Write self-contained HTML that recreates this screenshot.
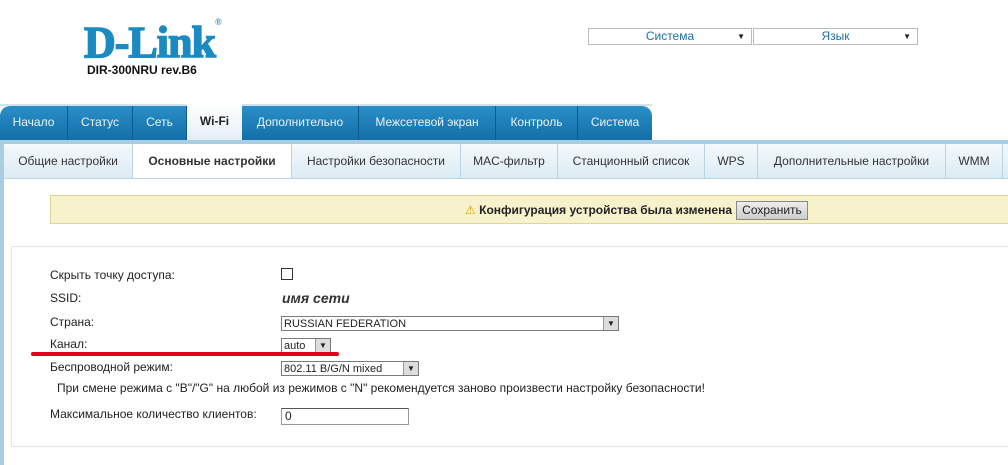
<!DOCTYPE html>
<html><head><meta charset="utf-8"><style>
body{margin:0;width:1008px;height:465px;background:#fff;position:relative;overflow:hidden;font-family:"Liberation Sans","DejaVu Sans",sans-serif;font-size:12px;color:#222}
.a{position:absolute}
.tab{position:absolute;top:106px;height:34px;line-height:32px;color:#e8f4fb;background:linear-gradient(#2b8fc8,#136fa8);border-right:1px solid #0d5b8c;text-align:center;font-size:12px}
.st{position:absolute;top:144px;height:34px;line-height:34px;color:#333;background:linear-gradient(#f4f9fc,#dcebf4);border-right:1px solid #b9d3e3;text-align:center;font-size:12px}
.lbl{position:absolute;left:50px;font-size:12px;color:#222}
.sel{position:absolute;border:1px solid #7a7a7a;background:#fff;height:15px;line-height:15px;font-size:11px;padding-left:2px;box-sizing:border-box}
.sel i{position:absolute;right:0;top:0;width:14px;height:13px;background:#ddd;border-left:1px solid #999;font-style:normal;font-size:8px;text-align:center;line-height:13px}
</style></head><body>
<div class="a" style="left:84px;top:17px;font:bold 44px 'Liberation Serif',serif;color:#1b8ac1;letter-spacing:-1px;-webkit-text-stroke:1.5px #1b8ac1">D-Link<span style="font-size:9px;vertical-align:top;-webkit-text-stroke:0">®</span></div>
<div class="a" style="left:87px;top:63px;font:bold 12px 'Liberation Sans',sans-serif;color:#111">DIR-300NRU rev.B6</div>
<div class="a" style="left:588px;top:28px;width:164px;height:17px;border:1px solid #bbb;box-sizing:border-box;text-align:center;line-height:15px;color:#1a6fa8">Система<span style="position:absolute;right:6px;font-size:8px;color:#222">▼</span></div>
<div class="a" style="left:753px;top:28px;width:165px;height:17px;border:1px solid #bbb;box-sizing:border-box;text-align:center;line-height:15px;color:#1a6fa8">Язык<span style="position:absolute;right:6px;font-size:8px;color:#222">▼</span></div>
<div class="a" style="left:0;top:104px;width:652px;height:2px;background:#cfe3ef"></div>
<div class="tab" style="left:0;width:67px;border-top-left-radius:10px">Начало</div>
<div class="tab" style="left:68px;width:64px">Статус</div>
<div class="tab" style="left:133px;width:53px">Сеть</div>
<div class="tab" style="left:187px;width:55px;top:104px;height:36px;line-height:34px;background:linear-gradient(#fff,#e3eff6);color:#222;font-weight:bold;border-right:none">Wi-Fi</div>
<div class="tab" style="left:242px;width:116px">Дополнительно</div>
<div class="tab" style="left:359px;width:136px">Межсетевой экран</div>
<div class="tab" style="left:496px;width:81px">Контроль</div>
<div class="tab" style="left:578px;width:74px;border-top-right-radius:10px;border-right:none">Система</div>
<div class="a" style="left:0;top:140px;width:1008px;height:4px;background:#a9cde3"></div>
<div class="a" style="left:0;top:140px;width:4px;height:325px;background:#a9cde3"></div>
<div class="st" style="left:4px;width:128px">Общие настройки</div>
<div class="st" style="left:133px;width:158px;background:#fff;font-weight:bold">Основные настройки</div>
<div class="st" style="left:292px;width:168px">Настройки безопасности</div>
<div class="st" style="left:461px;width:96px">MAC-фильтр</div>
<div class="st" style="left:558px;width:146px">Станционный список</div>
<div class="st" style="left:705px;width:52px">WPS</div>
<div class="st" style="left:758px;width:187px">Дополнительные настройки</div>
<div class="st" style="left:946px;width:56px">WMM</div>
<div class="st" style="left:1003px;width:5px;border:none"></div>
<div class="a" style="left:4px;top:178px;width:1004px;height:1px;background:#b9d3e3"></div>
<div class="a" style="left:50px;top:195px;width:960px;height:29px;background:#f8f2cc;border:1px solid #e0d49a;box-sizing:border-box"></div>
<div class="a" style="right:276px;top:203px;font-size:12px;font-weight:bold;color:#222;white-space:nowrap"><span style="color:#d4a000">⚠</span> Конфигурация устройства была изменена</div>
<div class="a" style="left:736px;top:201px;width:72px;height:19px;background:linear-gradient(#eee,#ccc);border:1px solid #888;box-sizing:border-box;text-align:center;line-height:17px;font-size:12px">Сохранить</div>
<div class="a" style="left:11px;top:246px;width:997px;height:201px;border:1px solid #e3e3e3;border-right:none;box-sizing:border-box"></div>
<div class="lbl" style="top:268px">Скрыть точку доступа:</div>
<div class="a" style="left:281px;top:268px;width:10px;height:10px;border:1px solid #333"></div>
<div class="lbl" style="top:291px">SSID:</div>
<div class="a" style="left:282px;top:290px;font:italic bold 14px 'Liberation Sans',sans-serif;color:#333">имя сети</div>
<div class="lbl" style="top:315px">Страна:</div>
<div class="sel" style="left:281px;top:316px;width:338px">RUSSIAN FEDERATION<i>▼</i></div>
<div class="lbl" style="top:337px">Канал:</div>
<div class="sel" style="left:281px;top:338px;width:50px">auto<i>▼</i></div>
<div class="a" style="left:31px;top:352px;width:308px;height:4px;background:#e2001a;border-radius:2px"></div>
<div class="lbl" style="top:360px">Беспроводной режим:</div>
<div class="sel" style="left:281px;top:361px;width:138px">802.11 B/G/N mixed<i>▼</i></div>
<div class="a" style="left:57px;top:381px;font-size:12px">При смене режима с "B"/"G" на любой из режимов с "N" рекомендуется заново произвести настройку безопасности!</div>
<div class="lbl" style="top:407px">Максимальное количество клиентов:</div>
<div class="a" style="left:281px;top:408px;width:128px;height:17px;border:1px solid #999;border-top-color:#555;box-sizing:border-box;padding-left:3px;line-height:15px">0</div>
</body></html>
